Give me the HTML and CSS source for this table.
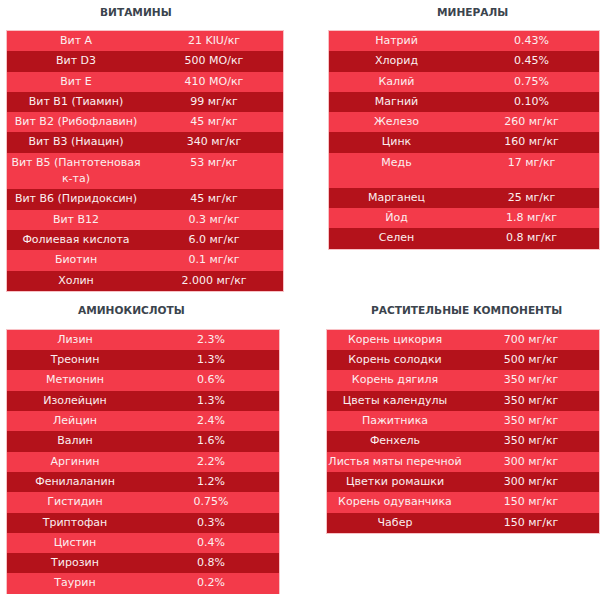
FILE: index.html
```html
<!DOCTYPE html>
<html lang="ru">
<head>
<meta charset="utf-8">
<link rel="stylesheet" href="styles.css">
</head>
<body>
<div class="page">
  <div class="row row-top">
    <section class="block block-vit">
      <h2 class="title title-vit">ВИТАМИНЫ</h2>
      <table class="tbl">
        <tr><td>Вит А</td><td>21 KIU/кг</td></tr>
        <tr><td>Вит D3</td><td>500 МО/кг</td></tr>
        <tr><td>Вит Е</td><td>410 МО/кг</td></tr>
        <tr><td>Вит В1 (Тиамин)</td><td>99 мг/кг</td></tr>
        <tr><td>Вит В2 (Рибофлавин)</td><td>45 мг/кг</td></tr>
        <tr><td>Вит В3 (Ниацин)</td><td>340 мг/кг</td></tr>
        <tr><td class="top">Вит В5 (Пантотеновая к-та)</td><td class="top">53 мг/кг</td></tr>
        <tr><td>Вит В6 (Пиридоксин)</td><td>45 мг/кг</td></tr>
        <tr><td>Вит В12</td><td>0.3 мг/кг</td></tr>
        <tr><td>Фолиевая кислота</td><td>6.0 мг/кг</td></tr>
        <tr><td>Биотин</td><td>0.1 мг/кг</td></tr>
        <tr><td>Холин</td><td>2.000 мг/кг</td></tr>
      </table>
    </section>
    <section class="block block-min">
      <h2 class="title title-min">МИНЕРАЛЫ</h2>
      <table class="tbl">
        <tr><td>Натрий</td><td>0.43%</td></tr>
        <tr><td>Хлорид</td><td>0.45%</td></tr>
        <tr><td>Калий</td><td>0.75%</td></tr>
        <tr><td>Магний</td><td>0.10%</td></tr>
        <tr><td>Железо</td><td>260 мг/кг</td></tr>
        <tr><td>Цинк</td><td>160 мг/кг</td></tr>
        <tr class="tall"><td class="top">Медь</td><td class="top">17 мг/кг</td></tr>
        <tr><td>Марганец</td><td>25 мг/кг</td></tr>
        <tr><td>Йод</td><td>1.8 мг/кг</td></tr>
        <tr><td>Селен</td><td>0.8 мг/кг</td></tr>
      </table>
    </section>
  </div>
  <div class="row row-bottom">
    <section class="block block-amino">
      <h2 class="title title-amino">АМИНОКИСЛОТЫ</h2>
      <table class="tbl">
        <tr><td>Лизин</td><td>2.3%</td></tr>
        <tr><td>Треонин</td><td>1.3%</td></tr>
        <tr><td>Метионин</td><td>0.6%</td></tr>
        <tr><td>Изолейцин</td><td>1.3%</td></tr>
        <tr><td>Лейцин</td><td>2.4%</td></tr>
        <tr><td>Валин</td><td>1.6%</td></tr>
        <tr><td>Аргинин</td><td>2.2%</td></tr>
        <tr><td>Фенилаланин</td><td>1.2%</td></tr>
        <tr><td>Гистидин</td><td>0.75%</td></tr>
        <tr><td>Триптофан</td><td>0.3%</td></tr>
        <tr><td>Цистин</td><td>0.4%</td></tr>
        <tr><td>Тирозин</td><td>0.8%</td></tr>
        <tr><td>Таурин</td><td>0.2%</td></tr>
      </table>
    </section>
    <section class="block block-plant">
      <h2 class="title title-plant">РАСТИТЕЛЬНЫЕ КОМПОНЕНТЫ</h2>
      <table class="tbl">
        <tr><td>Корень цикория</td><td>700 мг/кг</td></tr>
        <tr><td>Корень солодки</td><td>500 мг/кг</td></tr>
        <tr><td>Корень дягиля</td><td>350 мг/кг</td></tr>
        <tr><td>Цветы календулы</td><td>350 мг/кг</td></tr>
        <tr><td>Пажитника</td><td>350 мг/кг</td></tr>
        <tr><td>Фенхель</td><td>350 мг/кг</td></tr>
        <tr><td>Листья мяты перечной</td><td>300 мг/кг</td></tr>
        <tr><td>Цветки ромашки</td><td>300 мг/кг</td></tr>
        <tr><td>Корень одуванчика</td><td>150 мг/кг</td></tr>
        <tr><td>Чабер</td><td>150 мг/кг</td></tr>
      </table>
    </section>
  </div>
</div>
</body>
</html>
```
FILE: styles.css
```css
html, body {
  margin: 0;
  padding: 0;
  background: #ffffff;
}
body {
  font-family: "DejaVu Sans", Verdana, sans-serif;
  font-size: 11px;
  color: #ffffff;
}
.page {
  width: 610px;
}
.row {
  display: flex;
  align-items: flex-start;
}
.row-top {
  padding-top: 5px;
}
.row-bottom {
  padding-top: 12px;
}
.title {
  margin: 0;
  font-size: 10.6px;
  line-height: 14px;
  font-weight: bold;
  color: #3b444d;
  white-space: nowrap;
}
.row-top .title { margin-bottom: 12px; }
.row-bottom .title { margin-bottom: 13px; }

.block-vit { margin-left: 7px; width: 276px; }
.block-min { margin-left: 46px; width: 270px; }
.block-amino { margin-left: 7px; width: 272px; }
.block-plant { margin-left: 48px; width: 272px; }

.title-vit { padding-left: 93px; }
.title-min { padding-left: 108px; }
.title-amino { padding-left: 71px; }
.title-plant { padding-left: 44px; }

.tbl {
  width: 100%;
  border-collapse: collapse;
  table-layout: fixed;
  box-shadow: 0 0 0 1px rgba(240, 120, 128, 0.45);
}
.tbl td {
  width: 50%;
  padding: 2px 0;
  line-height: 16.3px;
  text-align: center;
  vertical-align: middle;
  color: #fbeff0;
}
.tbl tr:nth-child(odd) td { background: #f33a4a; }
.tbl tr:nth-child(even) td { background: #b4121b; }
.tbl td.top { vertical-align: top; }
.tbl tr.tall td { height: 31px; }
```
